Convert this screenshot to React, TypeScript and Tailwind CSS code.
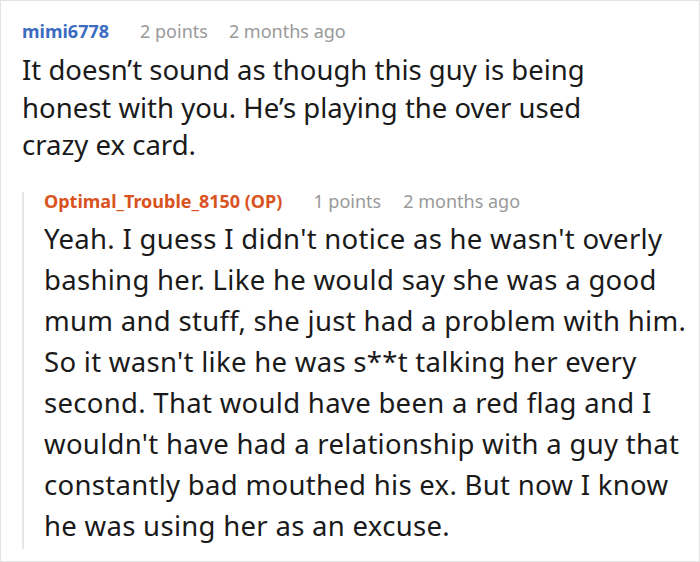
import React from 'react';

const reply = {
  user: 'Optimal_Trouble_8150 (OP)',
  points: '1 points',
  time: '2 months ago',
  lines: [
    "Yeah. I guess I didn't notice as he wasn't overly",
    'bashing her. Like he would say she was a good',
    'mum and stuff, she just had a problem with him.',
    "So it wasn't like he was s**t talking her every",
    'second. That would have been a red flag and I',
    "wouldn't have had a relationship with a guy that",
    'constantly bad mouthed his ex. But now I know',
    'he was using her as an excuse.',
  ],
};

export default function App() {
  return (
    <div
      className="w-[700px] h-[562px] bg-white"
      style={{ fontFamily: '"Noto Sans", "Open Sans", sans-serif' }}
    >
      <div className="h-[562px] border border-[#e3e3e3] pl-[21px] pt-[17px]">
        {/* top-level comment */}
        <div className="flex items-center text-[18px] leading-[26px]">
          <span className="font-bold text-[#3b6cbf]">mimi6778</span>
          <span className="ml-[31px] text-[#999999]">2 points</span>
          <span className="ml-[21px] text-[#999999]">2 months ago</span>
        </div>
        <p className="mt-[7px] text-[27.5px] leading-[37.5px] text-[#1a1a1a] w-[600px]">
          It doesn’t sound as though this guy is being honest with you. He’s playing the over used
          crazy ex card.
        </p>

        {/* reply */}
        <div className="mt-[28px] border-l-2 border-[#e6e6e6] pl-[20px] pb-[3px]">
          <div className="flex items-center text-[18px] leading-[18px]">
            <span className="font-bold text-[#d9531f]">{reply.user}</span>
            <span className="ml-[31px] text-[#999999]">{reply.points}</span>
            <span className="ml-[22px] text-[#999999]">{reply.time}</span>
          </div>
          <p className="mt-[8px] text-[27.5px] leading-[41px] tracking-[0.3px] text-[#1a1a1a] whitespace-nowrap">
            {reply.lines.map((line, i) => (
              <React.Fragment key={i}>
                {line}
                {i < reply.lines.length - 1 && <br />}
              </React.Fragment>
            ))}
          </p>
        </div>
      </div>
    </div>
  );
}
